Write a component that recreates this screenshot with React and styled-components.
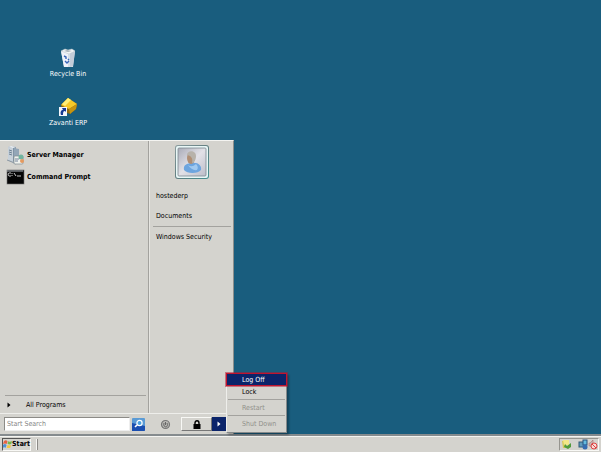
import React, { useState } from 'react';
import styled, { createGlobalStyle } from 'styled-components';

const GlobalStyle = createGlobalStyle`
  * {
    box-sizing: border-box;
  }
  body {
    margin: 0;
    background: #195d7e;
  }
  body, button, input {
    font-family: 'DejaVu Sans Condensed', 'DejaVu Sans', sans-serif;
    font-size: 7px;
    line-height: 10px;
    color: #000;
  }
  button {
    padding: 0;
    border: none;
    background: none;
  }
`;

const Screen = styled.div`
  display: flex;
  flex-direction: column;
  min-height: 100vh;
  background: #195d7e;
`;

const Desktop = styled.main`
  flex: 1;
  display: flex;
  flex-direction: column;
  align-items: flex-start;
`;

const Shortcuts = styled.div`
  display: grid;
  gap: 18px;
  padding: 48px 0 10px 36px;
`;

const Shortcut = styled.button`
  display: flex;
  flex-direction: column;
  align-items: center;
  gap: 1px;
  width: 64px;
  color: #fff;
`;

const StartMenu = styled.section`
  width: 234px;
  height: 294px;
  margin-top: auto;
  display: flex;
  flex-direction: column;
  background: #d4d3ce;
  border-top: 1px solid #f4f4f1;
  border-right: 1px solid #8b8e8c;
`;

const Columns = styled.div`
  flex: 1;
  display: flex;
`;

const Programs = styled.div`
  width: 149px;
  display: flex;
  flex-direction: column;
  padding: 3px 2px 0 5px;
  border-right: 1px solid #a3a29e;
`;

const Program = styled.button`
  display: flex;
  align-items: center;
  gap: 2px;
  height: 22px;
  font-weight: bold;
`;

const AllPrograms = styled.button`
  display: flex;
  align-items: center;
  gap: 15px;
  height: 18px;
  margin-top: auto;
  padding-left: 2px;
  border-top: 1px solid #a3a29e;
`;

const Places = styled.nav`
  flex: 1;
  display: flex;
  flex-direction: column;
  padding: 3px 2px 0 3px;
  border-left: 1px solid #e6e5e1;
`;

const Avatar = styled.div`
  align-self: center;
  height: 42px;
`;

const Place = styled.a`
  height: 20px;
  padding-left: 3px;
  line-height: 20px;
  color: #000;
  text-decoration: none;
`;

const Separator = styled.hr`
  width: 100%;
  margin: 0;
  border: none;
  border-top: 1px solid #a3a29e;
`;

const MenuFooter = styled.div`
  display: flex;
  align-items: center;
  height: 21px;
  padding-left: 4px;
  border-top: 1px solid #eeeeeb;
`;

const SearchBox = styled.input`
  width: 126px;
  height: 14px;
  padding: 0 2px;
  border: 1px solid #8c8b87;
  border-right-color: #eee;
  border-bottom-color: #eee;
  border-radius: 0;
  background: #fff;
  &::placeholder {
    color: #858585;
    opacity: 1;
  }
`;

const IconButton = styled.button`
  display: flex;
  width: 13px;
  margin-left: ${props => props.$gap};
`;

const LockButton = styled.button`
  display: flex;
  align-items: center;
  justify-content: center;
  width: 31px;
  height: 14px;
  margin-left: auto;
  border: 1px solid #f8f8f5;
  border-right-color: #777;
  border-bottom-color: #777;
`;

const PowerGroup = styled.div`
  position: relative;
  display: flex;
  margin-right: 7px;
`;

const ArrowButton = styled.button`
  display: flex;
  align-items: center;
  justify-content: center;
  width: 14px;
  height: 14px;
  background: #0b246a;
`;

const PowerMenu = styled.div`
  position: absolute;
  left: 14px;
  bottom: -2px;
  width: 61px;
  display: flex;
  flex-direction: column;
  padding: 1px;
  background: #d4d3ce;
  border: 1px solid #eeeeeb;
  border-right-color: #85898a;
  border-bottom-color: #85898a;
  box-shadow: 2px 2px 2px rgba(0, 0, 0, 0.3);
`;

const PowerItem = styled.button`
  height: ${props => (props.$active ? '13px' : '15px')};
  margin: ${props => (props.$active ? '-2px' : '0')};
  padding-left: ${props => (props.$active ? '15px' : '14px')};
  border: ${props => (props.$active ? '1px solid #c0142e' : 'none')};
  box-shadow: ${props => (props.$active ? '0 0 0 1px rgba(176, 20, 50, 0.5)' : 'none')};
  background: ${props => (props.$active ? '#0b246a' : 'none')};
  color: ${props => (props.$active ? '#fff' : '#000')};
  text-align: left;
  &:disabled {
    color: #92918b;
  }
`;

const Taskbar = styled.footer`
  display: flex;
  align-items: center;
  height: 18px;
  padding: 0 2px;
  background: #d4d3ce;
  border-top: 2px solid #858b8e;
  box-shadow: inset 0 1px #f4f4f1;
`;

const StartButton = styled.button`
  display: flex;
  align-items: center;
  width: 29px;
  height: 13px;
  border: 1px solid #555;
  border-right-color: #f8f8f5;
  border-bottom-color: #f8f8f5;
  font-weight: bold;
`;

const Grip = styled.span`
  width: 2px;
  height: 11px;
  margin-left: 5px;
  border-left: 1px solid #f8f8f5;
  border-right: 1px solid #8c8b87;
`;

const Tray = styled.div`
  display: flex;
  align-items: center;
  width: 40px;
  height: 13px;
  margin-left: auto;
  padding-left: 1px;
  border: 1px solid #96958f;
  border-right-color: #f8f8f5;
  border-bottom-color: #f8f8f5;
`;

const RecycleBinIcon = () => (
  <svg width="20" height="20" viewBox="0 0 20 20">
    <path d="M3 3 17 3 15 19 6 19Z" fill="#d5dfe8" />
    <path d="M3 3 10 5 10 19 6 19Z" fill="#f0f3fa" />
    <path d="M12 5 17 3 15 18 12 19Z" fill="#c3ccd8" />
    <path d="M3 3 7 1 10 2 14 1 17 3 11 6Z" fill="#f5f6f6" stroke="#b9c4cb" strokeWidth=".5" />
    <path d="M6 3 9 2 14 3 10 4Z" fill="#a8b3bb" />
    <path d="M6 8 8 9 8 11M7 13 9 15 11 13M10 11 11 12" fill="none" stroke="#3865b8" strokeWidth="1.4" />
  </svg>
);

const ErpIcon = () => (
  <svg width="20" height="20" viewBox="0 0 20 20">
    <path d="M3 8 10 1 19 7 18 12 12 17 4 14Z" fill="#8e6a10" />
    <path d="M3 8 10 1 19 7 11 12Z" fill="#f5c929" />
    <path d="M4 7 10 1 13 3 7 9Z" fill="#fff078" />
    <path d="M11 12 19 7 18 12 12 17Z" fill="#c69411" />
    <path d="M1 10H9V19H1Z" fill="#f4f6fc" />
    <path d="M3 18C2 15 3 13 5 13L4 11H8V15L7 14C5 14 5 16 5 18Z" fill="#173b93" />
  </svg>
);

const ServerIcon = () => (
  <svg width="20" height="20" viewBox="0 0 20 20">
    <path d="M3 2 6 1 11 2 11 15 8 17 3 15Z" fill="#8194a5" />
    <path d="M3 2 8 3 8 17 3 15Z" fill="#c7d1da" />
    <path d="M3 2 6 1 11 2 8 3Z" fill="#eef2f5" />
    <path d="M4 5 7 6M4 7 7 8M4 9 7 10" stroke="#536b7f" strokeWidth=".8" />
    <path d="M9 3 14 4V13L9 14Z" fill="#93a6b7" />
    <path d="M2 15 7 17 11 19" stroke="#8b98a4" fill="none" />
    <rect x="9" y="11" width="9" height="8" rx="1" fill="#eff1ed" stroke="#7f8b91" strokeWidth=".7" />
    <circle cx="16" cy="12" r="2.5" fill="#71b49f" />
    <circle cx="17" cy="16" r="2" fill="#e59a5f" />
    <path d="M10 14H14M10 16H13" stroke="#75849b" />
  </svg>
);

const PromptIcon = () => (
  <svg width="20" height="16" viewBox="0 0 20 16">
    <rect x="2" y="1" width="17" height="14" fill="#050505" stroke="#6f6f6f" strokeWidth=".6" />
    <path d="M2 2H18" stroke="#a9b0b7" />
    <path d="M6 4H4C3 4 3 7 4 7H6M7 4V5M7 6V7M9 4 11 7M12 7H16" fill="none" stroke="#ddd" strokeWidth=".9" />
  </svg>
);

const UserIcon = () => (
  <svg width="36" height="36" viewBox="0 0 36 36">
    <defs>
      <linearGradient id="frame" x1="0" y1="0" x2="1" y2="1">
        <stop offset="0" stopColor="#8b9c9e" />
        <stop offset=".5" stopColor="#607d80" />
        <stop offset="1" stopColor="#438f90" />
      </linearGradient>
      <linearGradient id="photo" x1="0" y1="0" x2="1" y2="1">
        <stop offset="0" stopColor="#a9abb7" />
        <stop offset=".5" stopColor="#e2e1e7" />
        <stop offset="1" stopColor="#bcbdc9" />
      </linearGradient>
    </defs>
    <rect x="1" y="1" width="34" height="34" rx="3" fill="url(#frame)" />
    <rect x="2" y="2" width="32" height="32" rx="2" fill="#e9f7f7" />
    <rect x="4" y="4" width="28" height="28" rx="1" fill="url(#photo)" stroke="#7c898f" strokeWidth=".8" />
    <path d="M10 26C9 21 13 19 18 19C24 18 28 22 27 26C24 30 13 30 10 26Z" fill="#6da5df" />
    <path d="M14 21Q18 24 22 20Q25 23 23 26Q18 27 14 21Z" fill="#a1c9f0" />
    <ellipse cx="17" cy="14" rx="4" ry="6" fill="#b08f75" />
    <path d="M13 11C13 6 22 6 22 12C22 16 20 19 18 19C19 15 18 12 13 11Z" fill="#b7b2aa" />
  </svg>
);

const SearchIcon = () => (
  <svg width="13" height="13" viewBox="0 0 13 13">
    <rect width="13" height="13" rx="1" fill="#5b9bd5" />
    <path d="M0 5 13 8V12Q13 13 12 13H0Z" fill="#1a4eb0" />
    <circle cx="7.5" cy="5" r="2.6" fill="#4ba0df" stroke="#fff" strokeWidth="1.2" />
    <path d="M5 7 3 9" stroke="#fff" strokeWidth="1.6" />
  </svg>
);

const PowerIcon = () => (
  <svg width="11" height="11" viewBox="0 0 11 11">
    <circle cx="5.5" cy="5.5" r="4" fill="#b9b8b4" stroke="#777" strokeWidth="1.2" />
    <path d="M4 4C3 7 5 8 6 8S8 6 7 4M5.5 3V6" fill="none" stroke="#666" />
  </svg>
);

const LockIcon = () => (
  <svg width="8" height="9" viewBox="0 0 8 9">
    <path d="M2 4V3C2 0 6 0 6 3V4" fill="none" stroke="#000" strokeWidth="1.4" />
    <rect x=".5" y="4" width="7" height="5" fill="#000" />
  </svg>
);

const Triangle = ({ color }) => (
  <svg width="4" height="6" viewBox="0 0 4 6">
    <path d="M.5 .5 3.5 3 .5 5.5Z" fill={color} />
  </svg>
);

const WindowsLogo = () => (
  <svg width="10" height="10" viewBox="0 0 10 10">
    <path d="M1 2Q3 0 5 2L4 5Q2 4 0 5Z" fill="#e66042" />
    <path d="M5.5 2Q7 3 10 2L9 5Q7 6 5 5Z" fill="#76b64b" />
    <path d="M0 6Q2 4 4 6L3 9Q1 8 0 9Z" fill="#5091d5" />
    <path d="M5 6Q7 7 9 6L8 9Q6 10 4 9Z" fill="#f3c744" />
  </svg>
);

const TrayIcons = () => (
  <svg width="37" height="11" viewBox="0 0 37 11">
    <path d="M1 2H5V9H2Z" fill="#d6c958" />
    <path d="M2 1H8V6H3Z" fill="#f2e787" />
    <path d="M4 5 6 7 10 4V8L7 10 3 8Z" fill="#519b3b" />
    <rect x="18" y="3" width="6" height="5" fill="#5f9bbd" stroke="#315b79" />
    <rect x="22" y="1" width="4" height="5" fill="#63bade" stroke="#28527f" />
    <circle cx="24" cy="8" r="2.5" fill="#356cb1" />
    <path d="M28 4H29L32 1V9L29 7H28Z" fill="#c3b5b3" stroke="#a66" strokeWidth=".5" />
    <circle cx="33" cy="7" r="3" fill="#f7dad6" stroke="#d44" />
    <path d="M31 5 35 9" stroke="#d44" />
  </svg>
);

const App = () => {
  const [query, setQuery] = useState('');

  return (
    <>
      <GlobalStyle />
      <Screen>
        <Desktop>
          <Shortcuts>
            <Shortcut><RecycleBinIcon />Recycle Bin</Shortcut>
            <Shortcut><ErpIcon />Zavanti ERP</Shortcut>
          </Shortcuts>
          <StartMenu>
            <Columns>
              <Programs>
                <Program><ServerIcon />Server Manager</Program>
                <Program><PromptIcon />Command Prompt</Program>
                <AllPrograms><Triangle color="#000" />All Programs</AllPrograms>
              </Programs>
              <Places>
                <Avatar><UserIcon /></Avatar>
                <Place href="#user">hostederp</Place>
                <Place href="#documents">Documents</Place>
                <Separator />
                <Place href="#security">Windows Security</Place>
              </Places>
            </Columns>
            <MenuFooter>
              <SearchBox
                aria-label="Start Search"
                placeholder="Start Search"
                value={query}
                onChange={(e) => setQuery(e.target.value)}
              />
              <IconButton $gap="2px" aria-label="Search"><SearchIcon /></IconButton>
              <IconButton $gap="15px" aria-label="Power"><PowerIcon /></IconButton>
              <LockButton aria-label="Lock computer"><LockIcon /></LockButton>
              <PowerGroup>
                <ArrowButton aria-label="More options"><Triangle color="#fff" /></ArrowButton>
                <PowerMenu>
                  <PowerItem $active>Log Off</PowerItem>
                  <PowerItem>Lock</PowerItem>
                  <Separator />
                  <PowerItem disabled>Restart</PowerItem>
                  <Separator />
                  <PowerItem disabled>Shut Down</PowerItem>
                </PowerMenu>
              </PowerGroup>
            </MenuFooter>
          </StartMenu>
        </Desktop>
        <Taskbar>
          <StartButton><WindowsLogo />Start</StartButton>
          <Grip />
          <Tray><TrayIcons /></Tray>
        </Taskbar>
      </Screen>
    </>
  );
};

export default App;
